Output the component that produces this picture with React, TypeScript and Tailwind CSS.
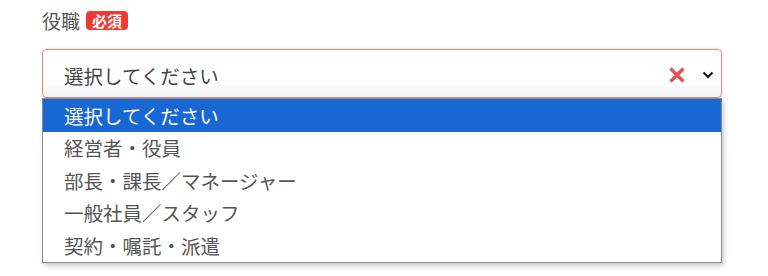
import React from 'react';

const options = [
  '選択してください',
  '経営者・役員',
  '部長・課長／マネージャー',
  '一般社員／スタッフ',
  '契約・嘱託・派遣',
];

const font = { fontFamily: '"Noto Sans CJK JP", "Noto Sans", sans-serif' };

export default function App() {
  return (
    <div className="w-[768px] h-[276px] bg-white pl-[42px] pt-[9px] text-[#555]" style={font}>
      <div className="flex items-center gap-[6px] h-[22px]">
        <span className="text-[19px] leading-none">役職</span>
        <span className="bg-[#ec3b35] text-white font-bold text-[15px] leading-none rounded-[4px] px-[6px] py-[2px] mt-[1px]">
          必須
        </span>
      </div>
      <div className="w-[680px] mt-[18px]">
        <div className="h-[49px] border border-[#e38a86] rounded-[4px] flex items-center pl-[21px] pr-[5px] bg-gradient-to-b from-white from-70% to-[#f1f1f1] shadow-[0_-1px_2px_rgba(120,200,120,0.25)]">
          <span className="flex-1 text-[19.5px] text-[#444] pt-[5px]">選択してください</span>
          <svg width="16" height="16" viewBox="0 0 16 16" className="mt-[2px]">
            <path d="M1.5 1.5 L14.5 14.5 M14.5 1.5 L1.5 14.5" stroke="#e2534f" strokeWidth="3.2" strokeLinecap="butt" />
          </svg>
          <svg width="12" height="8" viewBox="0 0 12 8" className="ml-[17px] mr-[2px] mt-[2px]">
            <path d="M1.5 1.5 L6 6 L10.5 1.5" stroke="#111" strokeWidth="2" fill="none" />
          </svg>
        </div>
        <ul className="border border-[#8a8a8a] shadow-[2px_3px_5px_rgba(0,0,0,0.2)] bg-white">
          {options.map((o, i) => (
            <li
              key={o}
              className={
                'h-[32.6px] flex items-center pl-[21px] text-[19.5px] ' +
                (i === 0 ? 'bg-[#1967d2] text-white' : 'text-[#555]')
              }
            >
              {o}
            </li>
          ))}
        </ul>
      </div>
    </div>
  );
}
